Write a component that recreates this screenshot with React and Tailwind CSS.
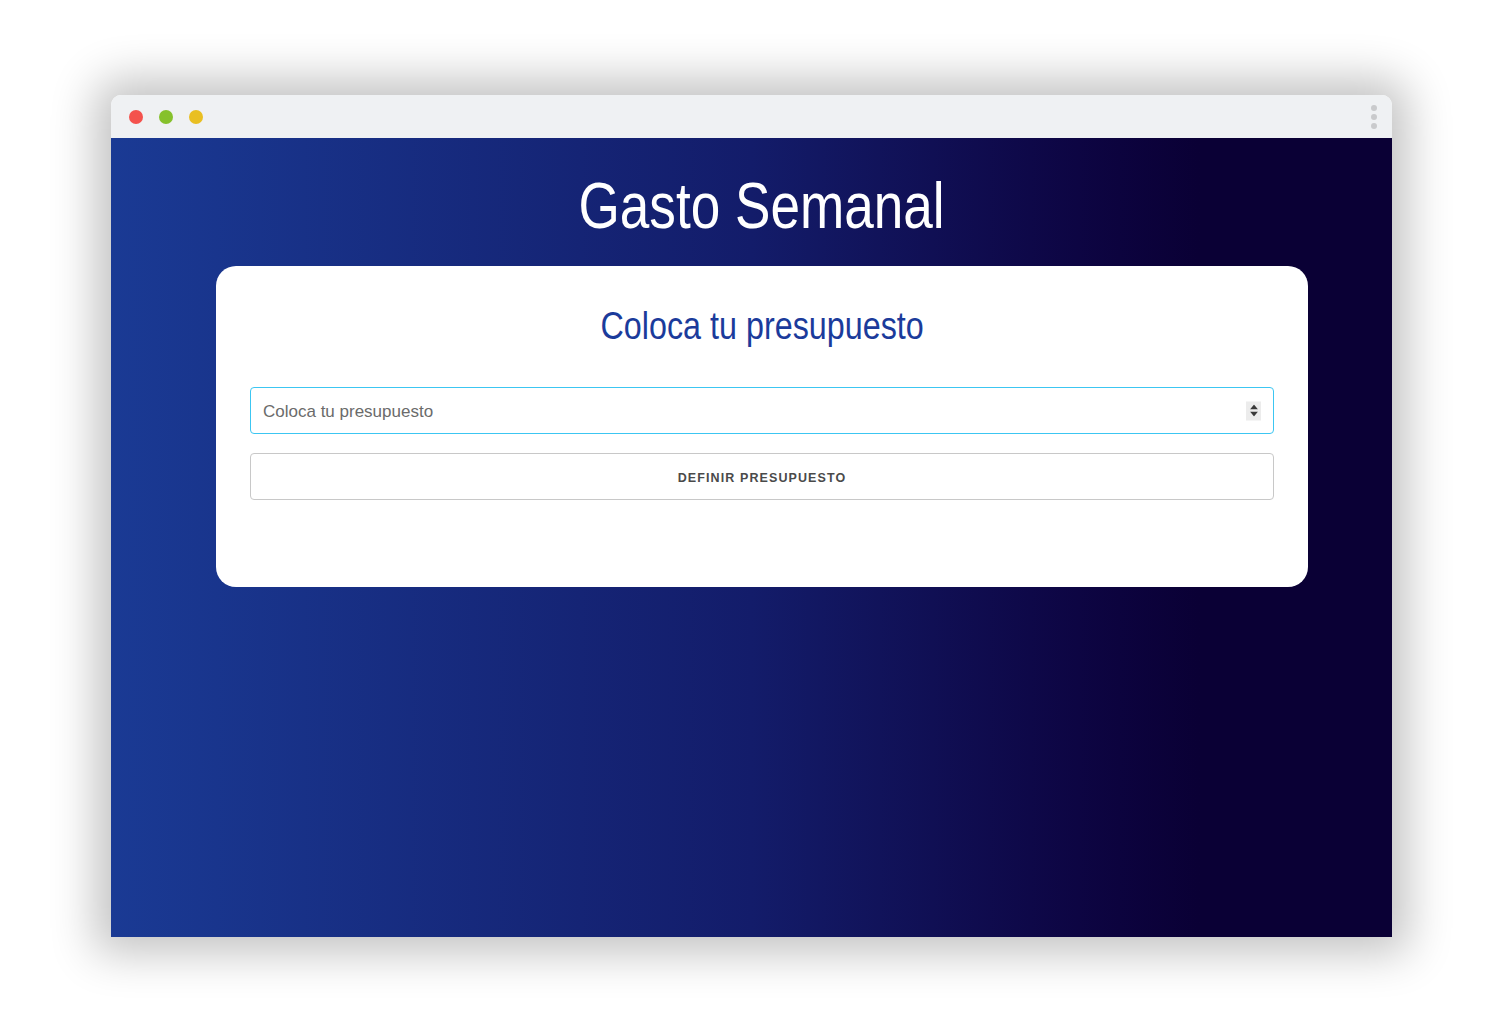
import React from 'react';

const Dot = ({ color }) => <span className={`w-[14px] h-[14px] rounded-full ${color}`} />;

const App = () => {
  return (
    <div className="w-full h-[1018px] bg-white pt-[95px] pl-[111px]" style={{ fontFamily: '"Liberation Sans", Arial, sans-serif' }}>
      <div className="w-[1281px] h-[842px] flex flex-col rounded-t-[10px] shadow-[0_0_45px_16px_rgba(0,0,0,0.24)]">
        {/* title bar */}
        <div className="h-[43px] flex items-center justify-between bg-[#eff1f3] rounded-t-[10px] pl-[18px] pr-[15px]">
          <div className="flex items-center gap-[16px]">
            <Dot color="bg-[#f4524d]" />
            <Dot color="bg-[#86c12c]" />
            <Dot color="bg-[#e9bf22]" />
          </div>
          <div className="flex flex-col gap-[3px]">
            <span className="w-[6px] h-[6px] rounded-full bg-[#c9cacc]" />
            <span className="w-[6px] h-[6px] rounded-full bg-[#c9cacc]" />
            <span className="w-[6px] h-[6px] rounded-full bg-[#c9cacc]" />
          </div>
        </div>

        {/* page */}
        <div className="flex-1 bg-linear-to-r from-[#1a3a94] via-[#131c6a] via-50% to-[#0a0035] to-85% pl-[105px] pr-[84px] pt-[30px]">
          <h1 className="text-center text-white text-[64px] leading-[76px]">
            <span className="inline-block scale-x-[0.83]">Gasto Semanal</span>
          </h1>

          <div className="mt-[22px] bg-white rounded-[20px] px-[34px] pt-[36px] pb-[87px]">
            <h2 className="text-center text-[#1b3b9b] text-[38px] leading-[48px]">
              <span className="inline-block scale-x-[0.85]">Coloca tu presupuesto</span>
            </h2>

            <div className="relative mt-[37px]">
              <input
                type="text"
                placeholder="Coloca tu presupuesto"
                className="w-full h-[47px] border-[1.5px] border-[#3cc6f2] rounded-[4px] px-[12px] pt-[2px] text-[17px] text-[#555] placeholder:text-[#6b6b6b] outline-none"
              />
              <div className="absolute right-[13px] top-1/2 -translate-y-1/2 w-[15px] h-[19px] bg-[#ececec] flex flex-col items-center justify-center gap-[2px]">
                <svg width="8" height="5" viewBox="0 0 8 5"><path d="M4 0L8 5H0z" fill="#3a3a3a" /></svg>
                <svg width="8" height="5" viewBox="0 0 8 5"><path d="M0 0h8L4 5z" fill="#3a3a3a" /></svg>
              </div>
            </div>

            <button className="mt-[19px] w-full h-[47px] pt-[4px] border-[1.5px] border-[#c8c8c8] rounded-[4px] bg-white text-[12.5px] font-bold tracking-[1.1px] text-[#4a4a4a] uppercase">
              Definir presupuesto
            </button>
          </div>
        </div>
      </div>
    </div>
  );
};

export default App;
